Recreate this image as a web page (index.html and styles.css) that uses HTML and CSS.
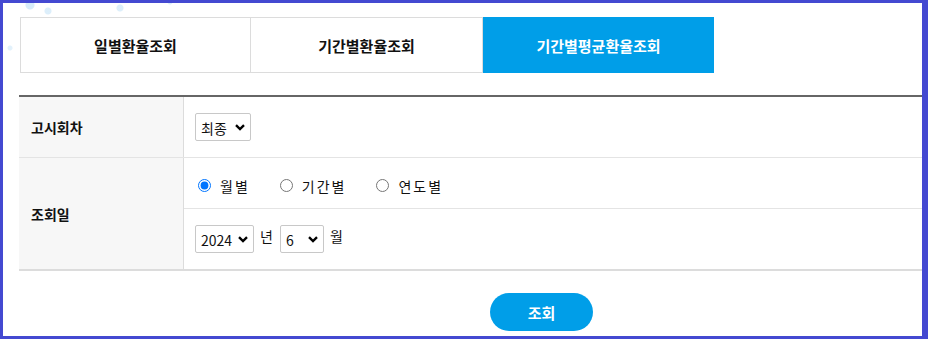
FILE: index.html
```html
<!DOCTYPE html>
<html lang="ko">
<head>
<meta charset="utf-8">
<title>기간별평균환율조회</title>
<link rel="stylesheet" href="styles.css">
</head>
<body>
<div class="page">
  <div class="tabs">
    <a class="tab">일별환율조회</a>
    <a class="tab tab-mid">기간별환율조회</a>
    <a class="tab tab-active">기간별평균환율조회</a>
  </div>

  <div class="form">
    <div class="row">
      <div class="label">고시회차</div>
      <div class="cell">
        <span class="sel sel-w56">
          <select><option>최종</option></select>
          <svg class="chev" viewBox="0 0 10 7" width="10" height="7"><path d="M1 1.2 L5 5 L9 1.2" fill="none" stroke="#000" stroke-width="2.4"/></svg>
        </span>
      </div>
    </div>
    <div class="row row-last">
      <div class="label">조회일</div>
      <div class="cell-stack">
        <div class="sub sub-radio">
          <label class="rad"><input type="radio" name="t" checked><span>월별</span></label>
          <label class="rad"><input type="radio" name="t"><span>기간별</span></label>
          <label class="rad"><input type="radio" name="t"><span>연도별</span></label>
        </div>
        <div class="sub sub-date">
          <span class="sel sel-w59">
            <select><option>2024</option></select>
            <svg class="chev" viewBox="0 0 10 7" width="10" height="7"><path d="M1 1.2 L5 5 L9 1.2" fill="none" stroke="#000" stroke-width="2.4"/></svg>
          </span>
          <span class="unit">년</span>
          <span class="sel sel-w44">
            <select><option>6</option></select>
            <svg class="chev" viewBox="0 0 10 7" width="10" height="7"><path d="M1 1.2 L5 5 L9 1.2" fill="none" stroke="#000" stroke-width="2.4"/></svg>
          </span>
          <span class="unit">월</span>
        </div>
      </div>
    </div>
  </div>

  <div class="actions">
    <button class="btn" type="button">조회</button>
  </div>
</div>
</body>
</html>
```

FILE: styles.css
```css
html, body {
  margin: 0;
  padding: 0;
}
html {
  overflow: hidden;
}
body {
  width: 928px;
  height: 339px;
  box-sizing: border-box;
  border: 3px solid #4449d1;
  border-right-width: 6px;
  background-color: #fff;
  background-image:
    radial-gradient(circle at 30px 5px, rgba(140, 200, 240, 0.35) 0 4px, transparent 5px),
    radial-gradient(circle at 48px 11px, rgba(140, 200, 240, 0.3) 0 3px, transparent 4px),
    radial-gradient(circle at 120px 8px, rgba(140, 200, 240, 0.3) 0 3px, transparent 4px),
    radial-gradient(circle at 170px 2px, rgba(140, 200, 240, 0.3) 0 2px, transparent 3px),
    radial-gradient(circle at 10px 48px, rgba(140, 200, 240, 0.25) 0 2px, transparent 3px);
  background-repeat: no-repeat;
  font-family: "Noto Sans CJK KR", "Noto Sans", sans-serif;
  color: #111;
}
.page {
  padding: 14px 0 0 17px;
}

/* tabs */
.tabs {
  display: flex;
  height: 56px;
}
.tab {
  width: 231px;
  box-sizing: border-box;
  display: flex;
  align-items: center;
  justify-content: center;
  border: 1px solid #dcdcdc;
  font-size: 15px;
  font-weight: 700;
  color: #111;
}
.tab-mid {
  width: 232px;
  border-left: none;
}
.tab-active {
  width: 231px;
  border: none;
  background: #009ee8;
  color: #fff;
}

/* form table */
.form {
  margin: 22px 0 0 -1px;
  width: 908px;
  border-top: 2px solid #666;
  border-bottom: 2px solid #dcdcdc;
}
.row {
  display: flex;
  border-bottom: 1px solid #e4e4e4;
}
.row-last {
  border-bottom: none;
}
.label {
  width: 165px;
  flex: none;
  background: #f7f7f7;
  border-right: 1px solid #dcdcdc;
  display: flex;
  align-items: center;
  padding-left: 12px;
  box-sizing: border-box;
  font-size: 14px;
  font-weight: 700;
  color: #111;
}
.cell {
  flex: 1;
  height: 60px;
  display: flex;
  align-items: center;
  padding-left: 11px;
}
.cell-stack {
  flex: 1;
  display: flex;
  flex-direction: column;
}
.sub {
  display: flex;
  align-items: center;
  padding-left: 11px;
}
.sub-radio {
  height: 51px;
  border-bottom: 1px solid #e4e4e4;
  padding-top: 5px;
  box-sizing: border-box;
  padding-left: 12px;
}
.sub-date {
  height: 60px;
}

/* selects */
.sel {
  position: relative;
  display: inline-flex;
  height: 28px;
}
.sel select {
  appearance: none;
  -webkit-appearance: none;
  height: 28px;
  box-sizing: border-box;
  border: 1px solid #c8c8c8;
  border-radius: 2px;
  background: #fff;
  padding: 2px 0 0 5px;
  font-family: "Noto Sans CJK KR", "Noto Sans", sans-serif;
  font-size: 14px;
  color: #111;
  outline: none;
}
.sel-w56 select { width: 56px; }
.sel-w59 select { width: 59px; }
.sel-w44 select { width: 44px; }
.chev {
  position: absolute;
  right: 6px;
  top: 11px;
  pointer-events: none;
}

.unit {
  font-size: 14px;
  margin: 0 7px 7px 6px;
  color: #111;
}

/* radios */
.rad {
  display: inline-flex;
  align-items: center;
  margin-right: 28px;
  font-size: 14px;
  letter-spacing: 2px;
  color: #111;
}
.rad input {
  width: 13px;
  height: 13px;
  margin: 0 9px 0 2px;
}

/* button */
.actions {
  display: flex;
  padding: 22px 0 0 470px;
}
.btn {
  width: 103px;
  height: 38px;
  border: none;
  border-radius: 19px;
  background: #009ee8;
  color: #fff;
  font-family: "Noto Sans CJK KR", "Noto Sans", sans-serif;
  font-size: 15px;
  font-weight: 700;
  cursor: pointer;
}
```
